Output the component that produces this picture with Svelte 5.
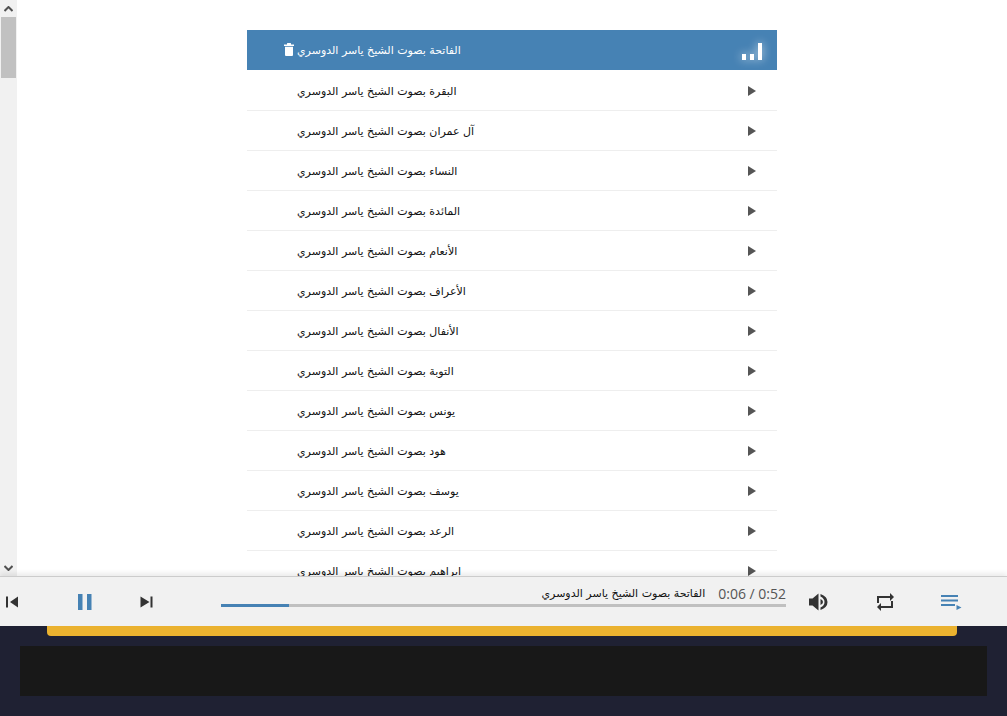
<script lang="ts">
	const suras = ['الفاتحة', 'البقرة', 'آل عمران', 'النساء', 'المائدة', 'الأنعام', 'الأعراف', 'الأنفال', 'التوبة', 'يونس', 'هود', 'يوسف', 'الرعد', 'ابراهيم'];
	const suffix = 'بصوت الشيخ ياسر الدوسري';
	const progress = 12;
</script>

<div class="page">
	<div class="content">
		<div class="scrollbar">
			<div class="arrow">
				<svg width="9" height="6" viewBox="0 0 9 6"><path d="M0.5 5 L4.5 1 L8.5 5" fill="none" stroke="#505050" stroke-width="2" /></svg>
			</div>
			<div class="thumb"></div>
			<div class="rest"></div>
			<div class="arrow">
				<svg width="9" height="6" viewBox="0 0 9 6"><path d="M0.5 1 L4.5 5 L8.5 1" fill="none" stroke="#505050" stroke-width="2" /></svg>
			</div>
		</div>
		<div class="scroller">
			<ul class="list">
				{#each suras as sura, i}
					<li class="row" class:active={i === 0}>
						<div class="title">
							{#if i === 0}
								<svg class="trash" width="10" height="13" viewBox="0 0 10 13"><path d="M0 1.5 H3 V0.5 Q3 0 3.5 0 H6.5 Q7 0 7 0.5 V1.5 H10 V3 H0 Z M1 3.8 H9 V12 Q9 13 8 13 H2 Q1 13 1 12 Z" fill="#fff" /></svg>
							{/if}
							<span dir="rtl">{sura} {suffix}</span>
						</div>
						{#if i === 0}
							<div class="bars">
								<span class="bar short"></span>
								<span class="bar short"></span>
								<span class="bar tall"></span>
							</div>
						{:else}
							<svg class="play" width="8" height="10" viewBox="0 0 8 10"><path d="M0 0 L8 5 L0 10 Z" fill="#555" /></svg>
						{/if}
					</li>
				{/each}
			</ul>
		</div>
	</div>

	<div class="player">
		<button class="prev" aria-label="previous">
			<svg width="15" height="12" viewBox="0 0 15 12"><path d="M1 0.5 H3 V11.5 H1 Z M13 0.5 V11.5 L5 6 Z" fill="#333" /></svg>
		</button>
		<button class="pause" aria-label="pause">
			<svg width="14" height="16" viewBox="0 0 14 16"><path d="M0 0 H4.5 V16 H0 Z M9 0 H13.5 V16 H9 Z" fill="#4682b4" /></svg>
		</button>
		<button class="next" aria-label="next">
			<svg width="14" height="12" viewBox="0 0 14 12"><path d="M0.5 0.5 L9.5 6 L0.5 11.5 Z M10.5 0.5 H12.5 V11.5 H10.5 Z" fill="#333" /></svg>
		</button>
		<div class="track">
			<div class="info">
				<span dir="rtl" class="now">الفاتحة {suffix}</span>
				<span class="time">0:06 / 0:52</span>
			</div>
			<div class="line"><div class="fill" style="width: {progress}%"></div></div>
		</div>
		<button class="volume" aria-label="volume">
			<svg width="19" height="18" viewBox="0 0 19 18"><path d="M0 5.5 H3.5 L9.5 0.5 V17.5 L3.5 12.5 H0 Z" fill="#333" /><path d="M11.5 1 Q18.5 3.5 18.5 9 Q18.5 14.5 11.5 17 V14.5 Q15.5 12.5 15.5 9 Q15.5 5.5 11.5 3.5 Z M11.5 6 Q14 7.2 14 9 Q14 10.8 11.5 12 Z" fill="#333" /></svg>
		</button>
		<button class="repeat" aria-label="repeat">
			<svg width="19" height="20" viewBox="0 0 19 20"><path d="M3 11 V5 H15" fill="none" stroke="#333" stroke-width="2" /><path d="M15 1 L19 5 L15 9 Z" fill="#333" /><path d="M17 9 V15 H5" fill="none" stroke="#333" stroke-width="2" /><path d="M6 11 L2 15 L6 19 Z" fill="#333" /></svg>
		</button>
		<button class="queue" aria-label="playlist">
			<svg width="21" height="15" viewBox="0 0 21 15"><path d="M0 0 H17 V2 H0 Z M0 4.5 H17 V6.5 H0 Z M0 9 H14 V11 H0 Z M15.5 10 L20.5 12.5 L15.5 15 Z" fill="#4682b4" /></svg>
		</button>
	</div>

	<div class="footer">
		<div class="strip"></div>
		<div class="box"></div>
	</div>
</div>

<style>
	:global(body) {
		margin: 0;
		background: #fff;
	}

	.page {
		display: flex;
		flex-direction: column;
		height: 716px;
		overflow: hidden;
		font-family: "DejaVu Sans", sans-serif;
	}

	.content {
		display: flex;
		height: 576px;
		flex: none;
		overflow: hidden;
	}

	.scrollbar {
		display: flex;
		flex-direction: column;
		width: 17px;
		flex: none;
		background: #f1f1f1;
	}

	.arrow {
		display: flex;
		align-items: center;
		justify-content: center;
		height: 17px;
		flex: none;
	}

	.thumb {
		height: 61px;
		margin: 0 1px;
		background: #c1c1c1;
	}

	.rest {
		flex: 1;
	}

	.scroller {
		flex: 1;
		overflow: hidden;
		padding-top: 30px;
	}

	.list {
		width: 530px;
		margin: 0 auto;
		padding: 0;
		list-style: none;
	}

	.row {
		display: flex;
		align-items: center;
		justify-content: space-between;
		box-sizing: border-box;
		height: 40px;
		padding: 0 21px 0 50px;
		border-bottom: 1px solid #eee;
		color: #111;
		font-size: 11px;
	}

	.row.active {
		height: 41px;
		padding: 0 15px 0 37px;
		background: #4682b4;
		border-bottom: 1px solid #fff;
		color: #fff;
	}

	.title {
		display: flex;
		align-items: center;
		gap: 3px;
		padding-top: 2px;
	}

	.row.active .title {
		padding-top: 0;
	}

	.play {
		margin-top: 1px;
	}

	.trash {
		margin-top: -2px;
	}

	.bars {
		display: flex;
		align-items: flex-end;
		gap: 4px;
		height: 17px;
		margin-top: 3px;
		filter: drop-shadow(0 0 5px rgba(255, 255, 255, 0.8));
	}

	.bar {
		width: 4px;
		background: #fff;
	}

	.bar.short {
		height: 6px;
	}

	.bar.tall {
		height: 17px;
	}

	.player {
		display: flex;
		align-items: center;
		box-sizing: border-box;
		height: 50px;
		flex: none;
		padding-left: 5px;
		background: #f1f1f1;
		border-top: 1px solid #ccc;
		box-shadow: 0 -3px 5px rgba(0, 0, 0, 0.08);
		position: relative;
	}

	button {
		display: flex;
		padding: 0;
		border: 0;
		background: none;
	}

	.pause {
		margin-left: 58px;
	}

	.next {
		margin-left: 48px;
	}

	.track {
		display: flex;
		flex-direction: column;
		width: 565px;
		margin-left: 67px;
		margin-bottom: 10px;
	}

	.info {
		display: flex;
		justify-content: flex-end;
		align-items: center;
		gap: 13px;
		height: 15px;
		padding-bottom: 3px;
		font-size: 11px;
		color: #111;
	}

	.time {
		font-family: "Open Sans", sans-serif;
		font-size: 14px;
		color: #555;
	}

	.line {
		height: 3px;
		background: #c0c0c0;
	}

	.fill {
		height: 100%;
		background: #4682b4;
	}

	.volume {
		margin-left: 23px;
	}

	.repeat {
		margin-left: 47px;
	}

	.queue {
		margin-left: 47px;
		margin-top: 1px;
	}

	.footer {
		flex: 1;
		background: #1f2133;
	}

	.strip {
		width: 910px;
		height: 10px;
		margin-left: 47px;
		background: #ebb22f;
		border-radius: 0 0 4px 4px;
	}

	.box {
		height: 50px;
		margin: 10px 20px 0;
		background: #181818;
	}
</style>
